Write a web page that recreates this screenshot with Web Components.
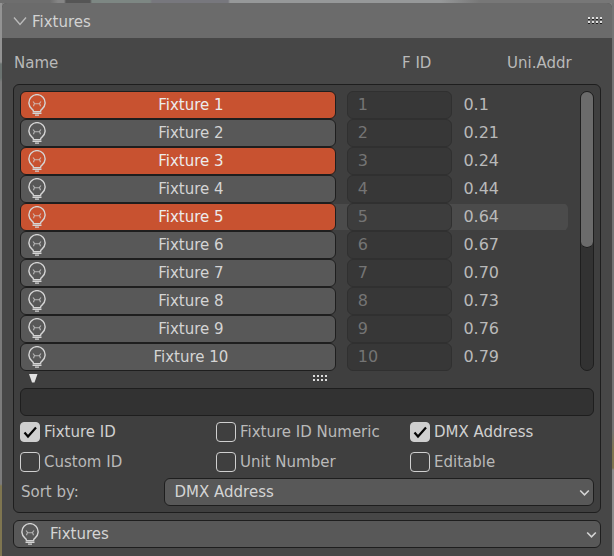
<!DOCTYPE html>
<html lang="en">
<head>
<meta charset="utf-8">
<title>Fixtures</title>
<style>
html { background: #7c7c7c; }
body {
  margin: 0; padding: 3px 2px 0; box-sizing: border-box; min-height: 100vh; display: flex;
  font: 15px/20px "DejaVu Sans", Verdana, sans-serif; color: #b9b9b9;
  background:
    linear-gradient(90deg, #6e6e6e 0 50px, #858585 58px 64px, #555 66px 90px, #7d8783 92px 150px, #77777d 152px 228px, #969899 230px 440px, #777 480px) top / 100% 3px no-repeat,
    linear-gradient(#939393 0 62px, #6b7371 64px 78px, #7c7c7c 82px 484px, #7f7650 486px) left / 2px 100% no-repeat,
    linear-gradient(#747474 0 430px, #7f7650 450px 468px, #8c8c8c 470px) right / 2px 100% no-repeat,
    #7c7c7c;
}
</style>
</head>
<body>
<tool-panel heading="Fixtures">
  <column-heads></column-heads>
  <inset-box>
    <fixture-list></fixture-list>
    <filter-field></filter-field>
    <option-grid>
      <check-option label="Fixture ID" checked></check-option>
      <check-option label="Fixture ID Numeric"></check-option>
      <check-option label="DMX Address" checked></check-option>
      <check-option label="Custom ID"></check-option>
      <check-option label="Unit Number"></check-option>
      <check-option label="Editable"></check-option>
    </option-grid>
    <drop-down label="Sort by:" value="DMX Address"></drop-down>
  </inset-box>
  <drop-down name="Panel content" value="Fixtures" icon></drop-down>
</tool-panel>

<script>
const bulb = `<svg class="bulb" width="20" height="22" viewBox="0 0 20 22" fill="none" stroke="currentColor" aria-hidden="true">
  <path stroke-width="1.4" d="M6.400 17.800v-.8c0-.8-.6-1.300-1.400-1.900A8.100 8.100 0 1 1 15 15.100c-.8.6-1.400 1.100-1.400 1.900v.8z"/>
  <path stroke-width="1.1" opacity=".75" d="M6 7.500l1.500 1.800L6.500 12.200M14 7.500l-1.500 1.800 1 2.900M7.500 9.700h5"/>
  <path stroke-width="1.3" d="M5.500 19.400h9M8 21.200h4"/></svg>`;

const grip = (shade) => `<svg width="17" height="9" viewBox="0 0 17 9" aria-hidden="true">${
  [0, 4, 8, 12].map(x => [1, 5].map(y =>
    `<rect x="${x + 1}" y="${y}" width="2" height="2" fill="#dedede"/><rect x="${x + 1}" y="${y + 2}" width="2" height="1" fill="${shade}"/>`).join('')).join('')}</svg>`;

class Base extends HTMLElement {
  connectedCallback() {
    if (this.shadowRoot) return;
    this.attachShadow({ mode: 'open' }).innerHTML =
      `<style>*{box-sizing:border-box}:host{display:block}svg{display:block;flex:none}button,input,select{font:inherit;margin:0}</style>` + this.render();
  }
}

customElements.define('tool-panel', class extends Base {
  render() {
    return `<style>
      :host { flex: 1; min-width: 0; background: #474747; border-radius: 5px 5px 0 0; overflow: hidden; }
      header { height: 35px; background: #6b6b6b; display: flex; align-items: center; justify-content: space-between; padding: 0 8px 0 11px; color: #d2d2d2; }
      h1 { margin: 0; font: inherit; }
      button { display: flex; align-items: center; gap: 5px; border: 0; padding: 2px 0 0; background: none; color: inherit; }
      .body { padding: 15px 11px 8px; }
    </style>
    <header>
      <h1><button aria-expanded="true"><svg width="14" height="12" viewBox="0 0 14 12" fill="none" stroke="#bababa" stroke-width="1.400" aria-hidden="true"><path d="M1 1.500l6 7 6-7"/></svg>${this.getAttribute('heading')}</button></h1>
      ${grip('#1c1c1c')}
    </header>
    <div class="body"><slot></slot></div>`;
  }
});

customElements.define('column-heads', class extends Base {
  render() {
    return `<style>
      :host { display: grid; grid-template-columns: 388fr 105fr 94fr; height: 31px; padding-left: 1px; }
    </style><span>Name</span><span>F ID</span><span>Uni.Addr</span>`;
  }
});

customElements.define('inset-box', class extends Base {
  render() {
    return `<style>
      :host { background: #3f3f3f; border: 1px solid #1e1e1e; border-radius: 6px; padding: 6px; margin-bottom: 7px; }
    </style><slot></slot>`;
  }
});

customElements.define('fixture-list', class extends Base {
  render() {
    const addresses = ['0.1', '0.21', '0.24', '0.44', '0.64', '0.67', '0.70', '0.73', '0.76', '0.79'];
    return `<style>
      .list { display: flex; gap: 12px; }
      .rows { flex: 1; min-width: 0; }
      .track { width: 14px; border: 1px solid #1e1e1e; border-radius: 7px; background: #323232; }
      .thumb { height: 56%; border-bottom: 1px solid #1e1e1e; border-radius: 7px; background: #6b6b6b; }
      .foot { display: grid; grid-template-columns: 18px 1fr; justify-items: center; height: 17px; padding: 3px 0 0 8px; }
      .foot button { justify-self: start; align-self: start; padding: 0; border: 0; background: none; }
    </style>
    <div class="list"><div class="rows">${addresses.map((a, i) =>
      `<fixture-row number="${i + 1}" address="${a}"${[0, 2, 4].includes(i) ? ' selected' : ''}${i === 4 ? ' active' : ''}></fixture-row>`).join('')}</div>
      <div class="track"><div class="thumb"></div></div></div>
    <div class="foot"><button aria-label="Filter options"><svg width="10" height="9" viewBox="0 0 10 9" fill="#e2e2e2"><path d="M1 0h8.500L6.500 8.500H4z"/></svg></button>${grip('#3f3f3f')}</div>`;
  }
});

customElements.define('fixture-row', class extends Base {
  render() {
    const n = this.getAttribute('number');
    return `<style>
      :host { display: grid; grid-template-columns: 317fr 106fr 105fr; column-gap: 11px; align-items: center; height: 28px; }
      :host([active]) { background: linear-gradient(#4b4b4b, #4b4b4b) center / 100% 26px no-repeat; border-radius: 6px; }
      button { display: flex; align-items: center; height: 28px; padding: 0 0 0 6px; border: 1px solid #1e1e1e; border-radius: 6px; background: #585858; color: #d4d4d4; }
      button span { flex: 1; text-align: center; }
      button[aria-pressed=true] { background: #c85230; color: #ececec; }
      .bulb { color: #d4d4d4; }
      input { width: 100%; height: 28px; padding: 0 10px 2px; border: 1px solid #303030; border-radius: 6px; background: rgba(48,48,48,.5); color: #747474; }
      input, .address { font-size: 16px; }
    </style>
    <button aria-pressed="${this.hasAttribute('selected')}">${bulb}<span>Fixture ${n}</span></button>
    <input aria-label="Fixture ID of fixture ${n}" value="${n}" disabled>
    <span class="address">${this.getAttribute('address')}</span>`;
  }
});

customElements.define('filter-field', class extends Base {
  render() {
    return `<style>
      input { display: block; width: 100%; height: 28px; padding: 0 10px; border: 1px solid #1e1e1e; border-radius: 6px; background: #323232; color: #d4d4d4; }
    </style><input type="text" aria-label="Filter fixtures">`;
  }
});

customElements.define('option-grid', class extends Base {
  render() {
    return `<style>
      :host { display: grid; grid-template-columns: 196fr 194fr 184fr; row-gap: 10px; padding: 6px 0; }
    </style><slot></slot>`;
  }
});

customElements.define('check-option', class extends Base {
  render() {
    return `<style>
      label { display: flex; gap: 4px; height: 20px; white-space: nowrap; }
      :host([checked]) { color: #d0d0d0; }
      .box { display: grid; }
      input, svg { grid-area: 1 / 1; }
      input { appearance: none; width: 20px; height: 20px; border: 1px solid #cfcfcf; border-radius: 4px; }
      input:checked { background: #cfcfcf; }
      svg { visibility: hidden; pointer-events: none; }
      input:checked + svg { visibility: visible; }
    </style>
    <label><span class="box"><input type="checkbox"${this.hasAttribute('checked') ? ' checked' : ''}><svg width="20" height="20" viewBox="0 0 20 20" fill="none" stroke="#050505" stroke-width="2.200" aria-hidden="true"><path d="M4.500 10.500l3.500 4L16 5.500"/></svg></span>${this.getAttribute('label')}</label>`;
  }
});

customElements.define('drop-down', class extends Base {
  render() {
    const label = this.getAttribute('label'), icon = this.hasAttribute('icon');
    return `<style>
      .line { display: grid; grid-template-columns: ${label ? '1fr 3fr' : '1fr'}; align-items: center; }
      label { padding-left: 1px; }
      .field { display: grid; align-items: center; color: #d4d4d4; }
      select, svg { grid-area: 1 / 1; }
      select { appearance: none; width: 100%; height: 28px; padding: 0 24px 0 ${icon ? 36 : 10}px; border: 1px solid #1e1e1e; border-radius: 6px; background: #585858; color: inherit; }
      svg { pointer-events: none; z-index: 1; }
      .bulb { margin-left: 7px; }
      .arrow { justify-self: end; margin: 2px 4px 0 0; }
    </style>
    <div class="line">${label ? `<label for="s">${label}</label>` : ''}
      <div class="field"><select id="s"${label ? '' : ` aria-label="${this.getAttribute('name')}"`}><option>${this.getAttribute('value')}</option></select>
      ${icon ? bulb : ''}<svg class="arrow" width="11" height="8" viewBox="0 0 11 8" fill="none" stroke="currentColor" stroke-width="1.600" aria-hidden="true"><path d="M1.200 1.500l4.300 4.300 4.300-4.300"/></svg></div></div>`;
  }
});
</script>
</body>
</html>
